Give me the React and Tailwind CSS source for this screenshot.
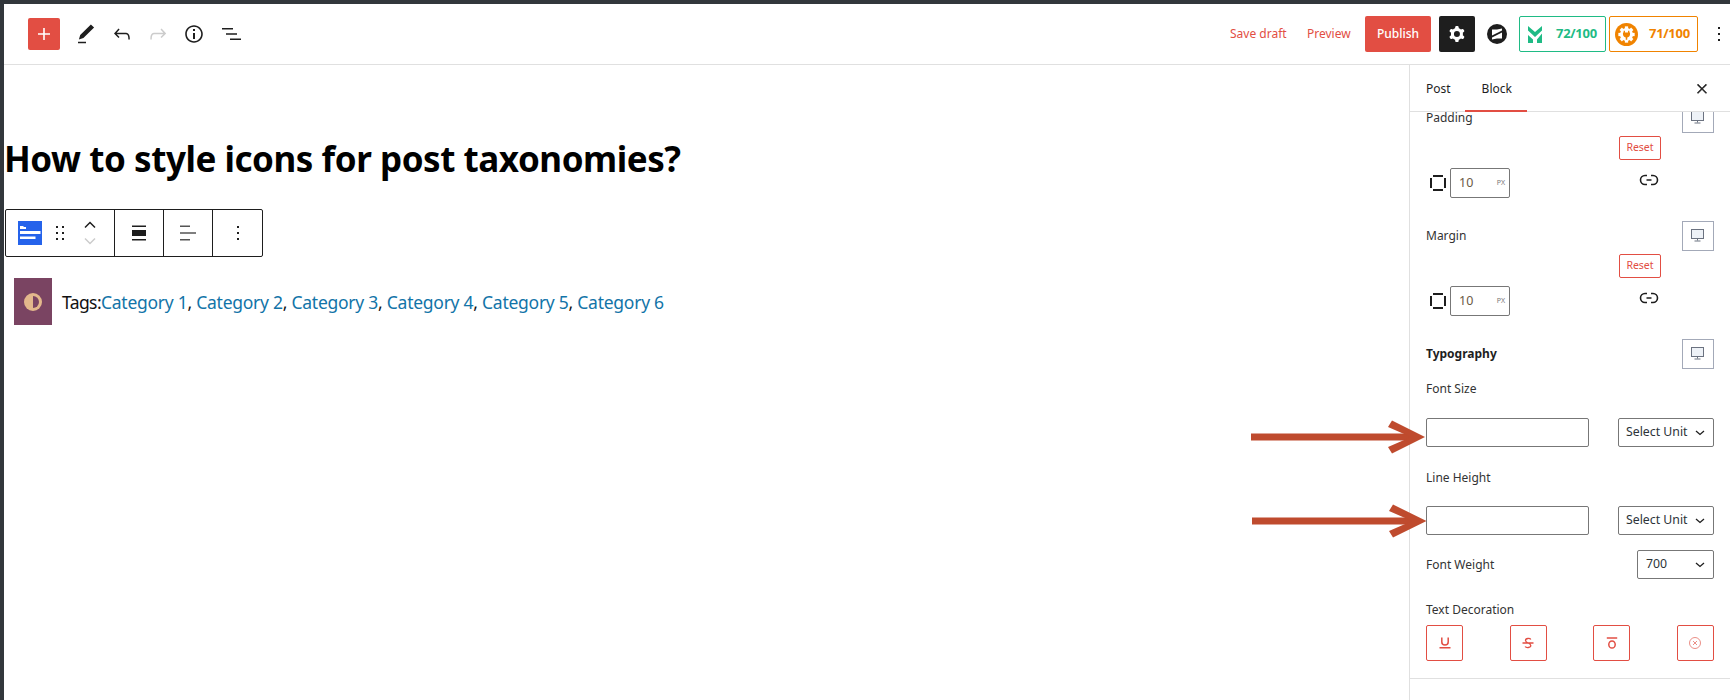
import React from "react";

const Font = "font-['Noto_Sans','Open_Sans',sans-serif]";

function HeaderIcons() {
  return (
    <div className="flex items-center">
      <button className="w-8 h-8 ml-[24px] bg-[#e24e43] rounded-[2px] flex items-center justify-center">
        <svg width="24" height="24" viewBox="0 0 24 24" fill="#fff"><path d="M18 11.2h-5.2V6h-1.6v5.2H6v1.6h5.2V18h1.6v-5.2H18z" /></svg>
      </button>
      <svg className="ml-[14px]" width="24" height="24" viewBox="0 0 24 24" fill="#1e1e1e">
        <path d="M20.1 5.1 16.9 2 6.2 12.6l-1.3 4.4 4.5-1.3L20.1 5.1zM4 20.8h8v-1.5H4v1.5z" transform="translate(0 .4)" />
      </svg>
      <svg className="ml-[12px]" width="24" height="24" viewBox="0 0 24 24" fill="#1e1e1e">
        <path d="M18.3 11.7c-.6-.6-1.4-.9-2.3-.9H6.700l2.900-3.300-1.100-1-4.500 5L8.500 16l1-1-2.700-2.700H16c.5 0 .9.2 1.300.5 1 1 1 3.400 1 4.500v.3h1.500v-.2c0-1.500 0-4.300-1.500-5.700z" />
      </svg>
      <svg className="ml-[12px]" width="24" height="24" viewBox="0 0 24 24" fill="#cccccc">
        <path d="M15.600 6.500l-1.100 1 2.900 3.300H8c-.9 0-1.700.3-2.300.9-1.400 1.500-1.400 4.200-1.400 5.700v.2h1.500v-.3c0-1.100 0-3.500 1-4.500.3-.3.7-.5 1.300-.5h9.200L14.500 15l1.100 1.100 4.600-4.600-4.600-5z" />
      </svg>
      <svg className="ml-[12px]" width="24" height="24" viewBox="0 0 24 24" fill="#1e1e1e">
        <path d="M12 3.200c-4.800 0-8.800 3.900-8.800 8.800 0 4.800 3.900 8.800 8.800 8.800 4.800 0 8.800-3.900 8.800-8.800 0-4.800-4-8.800-8.800-8.800zm0 16c-4 0-7.200-3.300-7.200-7.200C4.800 8 8 4.800 12 4.800s7.200 3.300 7.200 7.200c0 4-3.200 7.200-7.200 7.200zM11 17h2v-6h-2v6zm0-8h2V7h-2v2z" />
      </svg>
      <svg className="ml-[12px]" width="24" height="24" viewBox="0 0 24 24" fill="#1e1e1e">
        <path d="M4 6h11v1.500H4zM8 11.300h11v1.500H8zM12 16.500h11V18H12z" />
      </svg>
    </div>
  );
}

function Gear({ size = 24, fill = "#fff" }) {
  return (
    <svg width={size} height={size} viewBox="0 0 24 24" fill={fill}>
      <path fillRule="evenodd" clipRule="evenodd" d="M10.289 4.836A1 1 0 0 1 11.275 4h1.306a1 1 0 0 1 .987.836l.244 1.466c.787.26 1.503.679 2.108 1.218l1.393-.522a1 1 0 0 1 1.216.437l.653 1.13a1 1 0 0 1-.23 1.273l-1.148.944a6.025 6.025 0 0 1 0 2.435l1.149.946a1 1 0 0 1 .23 1.272l-.653 1.13a1 1 0 0 1-1.216.437l-1.394-.522c-.605.54-1.32.958-2.108 1.218l-.244 1.466a1 1 0 0 1-.987.836h-1.306a1 1 0 0 1-.986-.836l-.244-1.466a5.995 5.995 0 0 1-2.108-1.218l-1.394.522a1 1 0 0 1-1.217-.436l-.653-1.131a1 1 0 0 1 .23-1.272l1.149-.946a6.026 6.026 0 0 1 0-2.435l-1.148-.944a1 1 0 0 1-.23-1.272l.653-1.131a1 1 0 0 1 1.217-.437l1.393.522a5.994 5.994 0 0 1 2.108-1.218l.244-1.466zM14.929 12a3 3 0 1 1-6 0 3 3 0 0 1 6 0z" />
    </svg>
  );
}

function HeaderRight() {
  return (
    <div className="flex items-center">
      <span className="text-[12px] text-[#e24e43] w-[57px] whitespace-nowrap">Save draft</span>
      <span className="text-[12px] text-[#e24e43] ml-[20px] w-[44px] whitespace-nowrap">Preview</span>
      <button className="ml-[14px] w-[66px] h-9 bg-[#e24e43] rounded-[2px] text-[12px] font-medium text-white">Publish</button>
      <button className="ml-[8px] w-9 h-9 bg-[#1e1e1e] rounded-[2px] flex items-center justify-center">
        <Gear />
      </button>
      <svg className="ml-[12px]" width="20" height="20" viewBox="0 0 20 20">
        <circle cx="10" cy="10" r="10" fill="#1e1e1e" />
        <path d="M5 5.500h5L15 4.500v2L5 11.500zM15 8.500v6h-5L5 15.500v-2z" fill="#fff" />
      </svg>
      <div className="ml-[12px] w-[87px] h-9 border border-[#1fbb85] rounded-[2px] flex items-center pl-[8px] gap-[14px]">
        <svg width="14" height="17" viewBox="0 0 14 17" fill="#1fbb85">
          <path d="M0 0 7 6 14 0v4.500L7 11 0 4.500zM0 9 5 13.500V17H0zM14 7.500V17H9v-3.500z" />
        </svg>
        <span className="text-[13px] font-bold text-[#1fbb85] whitespace-nowrap tracking-[-0.3px]">72/100</span>
      </div>
      <div className="ml-[3px] w-[89px] h-9 border border-[#f08300] rounded-[2px] flex items-center pl-[5px] gap-[11px]">
        <svg width="23" height="23" viewBox="0 0 24 24">
          <circle cx="12" cy="12" r="12" fill="#f08300" />
          <circle cx="12" cy="12" r="6.800" fill="#fff" />
          <g fill="#fff">
            <rect x="10.300" y="3.500" width="3.400" height="17" />
            <rect x="10.300" y="3.500" width="3.400" height="17" transform="rotate(45 12 12)" />
            <rect x="10.300" y="3.500" width="3.400" height="17" transform="rotate(90 12 12)" />
            <rect x="10.300" y="3.500" width="3.400" height="17" transform="rotate(135 12 12)" />
          </g>
          <path d="M9 8h1.400v2h3.200V8H15v2h.7v1.500a3.700 3.700 0 0 1-2.900 3.600V17.500h-1.600v-2.400A3.700 3.700 0 0 1 8.300 11.500V10H9z" fill="#f08300" />
        </svg>
        <span className="text-[13px] font-bold text-[#f08300] whitespace-nowrap tracking-[-0.3px]">71/100</span>
      </div>
      <svg className="ml-[9px]" width="24" height="24" viewBox="0 0 24 24" fill="#1e1e1e">
        <path d="M13 19h-2v-2h2v2zm0-6h-2v-2h2v2zm0-6h-2V5h2v2z" />
      </svg>
    </div>
  );
}

function BlockToolbar() {
  return (
    <div className="ml-[1px] mt-[27px] w-[258px] h-12 border border-[#1e1e1e] rounded-[2px] flex bg-white">
      <div className="w-[109px] border-r border-[#1e1e1e] flex items-center">
        <svg className="ml-[12px]" width="24" height="24" viewBox="0 0 24 24">
          <rect width="24" height="24" fill="#2563eb" />
          <rect x="2" y="10" width="20.500" height="3" fill="#fff" />
          <rect x="2" y="15.500" width="15.500" height="2.500" fill="#fff" />
          <path d="M2 5h3l1 1h2v2H2z" fill="#fff" />
        </svg>
        <svg className="ml-[12px]" width="12" height="24" viewBox="0 0 12 24" fill="#1e1e1e">
          <path d="M2 5h2v2H2zM8 5h2v2H8zM2 11h2v2H2zM8 11h2v2H8zM2 17h2v2H2zM8 17h2v2H8z" />
        </svg>
        <div className="ml-[18px] flex flex-col items-center gap-[8px]">
          <svg width="12" height="8" viewBox="0 0 12 8" fill="none" stroke="#1e1e1e" strokeWidth="1.500"><path d="M1 6.500 6 1.500l5 5" /></svg>
          <svg width="12" height="8" viewBox="0 0 12 8" fill="none" stroke="#cccccc" strokeWidth="1.500"><path d="M1 1.500 6 6.500l5-5" /></svg>
        </div>
      </div>
      <div className="w-[49px] border-r border-[#1e1e1e] flex items-center justify-center">
        <svg width="24" height="24" viewBox="0 0 24 24" fill="#1e1e1e">
          <path d="M5 4.500h14V6H5zM5 9h14v6H5zM5 18h14v1.500H5z" />
        </svg>
      </div>
      <div className="w-[49px] border-r border-[#1e1e1e] flex items-center justify-center">
        <svg width="24" height="24" viewBox="0 0 24 24" fill="#555">
          <path d="M4 4.500h10V6H4zM4 11.200h16v1.600H4zM4 18h10v1.500H4z" />
        </svg>
      </div>
      <div className="flex-1 flex items-center justify-center">
        <svg width="24" height="24" viewBox="0 0 24 24" fill="#1e1e1e">
          <path d="M13 19h-2v-2h2v2zm0-6h-2v-2h2v2zm0-6h-2V5h2v2z" />
        </svg>
      </div>
    </div>
  );
}

function Canvas() {
  const cats = ["Category 1", "Category 2", "Category 3", "Category 4", "Category 5", "Category 6"];
  return (
    <main className="flex-1 min-w-0 flex flex-col">
      <h1 className="mt-[71px] text-[35px] leading-[46px] font-bold text-black whitespace-nowrap tracking-[-0.45px]">
        How to style icons for post taxonomies?
      </h1>
      <BlockToolbar />
      <div className="mt-[21px] ml-[10px] flex items-center">
        <div className="w-[38px] h-[47px] bg-[#7a4462] flex items-center justify-center">
          <svg width="18" height="18" viewBox="0 0 18 18">
            <circle cx="9" cy="9" r="9" fill="#e3b88c" />
            <path d="M9 3a6 6 0 0 1 0 12z" fill="#7a4462" />
          </svg>
        </div>
        <p className="ml-[10px] text-[17.5px] leading-[24px] text-[#111] whitespace-nowrap tracking-[-0.26px]">
          <span className="tracking-[-0.6px]">Tags:</span>
          {cats.map((c, i) => (
            <React.Fragment key={c}>
              <span className="text-[#1274a8]">{c}</span>
              {i < cats.length - 1 ? ", " : ""}
            </React.Fragment>
          ))}
        </p>
      </div>
    </main>
  );
}

function Monitor() {
  return (
    <svg width="18" height="18" viewBox="0 0 18 18" fill="none" stroke="#6b7280" strokeWidth="1">
      <rect x="2.500" y="2.500" width="12" height="9" fill="#eef2f7" />
      <path d="M8.500 11.500v2M5.500 14h6" />
    </svg>
  );
}

function RespButton() {
  return (
    <div className="w-8 h-[30px] border border-[#a3a9b8] flex items-center justify-center shrink-0">
      <Monitor />
    </div>
  );
}

function Spacing({ label }) {
  return (
    <div className="flex flex-col">
      <div className="flex justify-between items-center h-[30px]">
        <span className="text-[12px] text-[#333]">{label}</span>
        <RespButton />
      </div>
      <div className="flex justify-end pr-[53px] mt-[3px]">
        <button className="w-[42px] h-6 border border-[#e24e43] rounded-[2px] text-[10.5px] text-[#e24e43]">Reset</button>
      </div>
      <div className="flex items-center mt-[8px] h-[30px]">
        <svg className="ml-[3px]" width="18" height="18" viewBox="0 0 18 18" fill="#1e1e1e">
          <path d="M4 1h10v2H4zM4 15h10v2H4zM1 4h2v10H1zM15 4h2v10h-2z" />
        </svg>
        <div className="ml-[3px] w-[60px] h-[30px] border border-[#777] rounded-[2px] flex items-center justify-between pl-[8px] pr-[4px]">
          <span className="text-[12.5px] text-[#6b5a45]">10</span>
          <span className="text-[7px] text-[#777]">PX</span>
        </div>
        <svg className="ml-[129px] mb-[6px]" width="20" height="20" viewBox="0 0 20 20" fill="none" stroke="#1e1e1e" strokeWidth="1.600">
          <path d="M8 5.500H6a4.500 4.500 0 0 0 0 9h2M12 5.500h2a4.500 4.500 0 0 1 0 9h-2M7.500 10h5" />
        </svg>
      </div>
    </div>
  );
}

function Chevron() {
  return (
    <svg width="10" height="6" viewBox="0 0 10 6" fill="none" stroke="#1e1e1e" strokeWidth="1.300"><path d="M1 1l4 3.500L9 1" /></svg>
  );
}

function UnitRow({ gap }) {
  return (
    <div className={`flex justify-between h-[29px] ${gap}`}>
      <div className="w-[163px] border border-[#777] rounded-[2px]" />
      <div className="w-[96px] border border-[#777] rounded-[2px] flex items-center justify-between pl-[7px] pr-[8px]">
        <span className="text-[12.3px] text-[#2c3338] whitespace-nowrap">Select Unit</span>
        <Chevron />
      </div>
    </div>
  );
}

function Sidebar() {
  const iconBtn = "w-[37px] h-[36px] border border-[#e24e43] rounded-[2px] flex items-center justify-center";
  return (
    <aside className="w-[321px] shrink-0 border-l border-[#e0e0e0] flex flex-col h-[635px]">
      <div className="h-[47px] shrink-0 border-b border-[#e0e0e0] flex items-center relative pt-[2px]">
        <span className="ml-[16px] text-[12px] text-[#1e1e1e]">Post</span>
        <span className="ml-[31px] text-[12px] text-[#1e1e1e]">Block</span>
        <span className="absolute left-[55px] bottom-[-1px] w-[62px] h-[2px] bg-[#e24e43]" />
        <svg className="ml-auto mr-[19px]" width="18" height="18" viewBox="0 0 24 24" fill="#1e1e1e" stroke="#1e1e1e" strokeWidth="0.600">
          <path d="M13 11.800l5.300-5.300-1.100-1.100-5.200 5.300-5.300-5.300-1.100 1.100 5.300 5.300-5.300 5.200 1.100 1.100 5.300-5.300 5.200 5.300 1.100-1.100z" />
        </svg>
      </div>
      <div className="flex-1 overflow-hidden">
        <div className="px-[16px] -mt-[9px]">
          <Spacing label="Padding" />
          <div className="mt-[23px]"><Spacing label="Margin" /></div>
          <div className="mt-[23px] flex justify-between items-center h-[30px]">
            <span className="text-[12px] font-bold text-[#1e1e1e]">Typography</span>
            <RespButton />
          </div>
          <div className="mt-[11px] text-[12px] leading-[18px] text-[#333]">Font Size</div>
          <UnitRow gap="mt-[20px]" />
          <div className="mt-[22px] text-[12px] leading-[18px] text-[#333]">Line Height</div>
          <UnitRow gap="mt-[19px]" />
          <div className="mt-[15px] flex justify-between items-center h-[29px]">
            <span className="text-[12px] text-[#333]">Font Weight</span>
            <div className="w-[77px] h-[29px] border border-[#777] rounded-[2px] flex items-center justify-between pl-[8px] pr-[8px]">
              <span className="text-[12.3px] text-[#2c3338]">700</span>
              <Chevron />
            </div>
          </div>
          <div className="mt-[22px] text-[12px] leading-[18px] text-[#333]">Text Decoration</div>
          <div className="mt-[6px] flex justify-between">
            <div className={iconBtn}>
              <svg width="14" height="14" viewBox="0 0 14 14" fill="none" stroke="#e24e43" strokeWidth="1.500"><path d="M3.800 1.500v4.500a3.200 3 0 0 0 6.400 0V1.500M1.500 11.800h11" /></svg>
            </div>
            <div className={iconBtn}>
              <svg width="14" height="14" viewBox="0 0 14 14" fill="none" stroke="#e24e43" strokeWidth="1.300"><path d="M9.800 3.500C9 2 4.500 2 4.500 4.500S9.800 7 9.800 9.500 5 12 4.200 10.500M1.500 7h11" /></svg>
            </div>
            <div className={iconBtn}>
              <svg width="14" height="14" viewBox="0 0 14 14" fill="none" stroke="#e24e43" strokeWidth="1.500"><path d="M1.800 2h10.400" /><ellipse cx="7" cy="8.500" rx="3.200" ry="3.600" /></svg>
            </div>
            <div className={iconBtn}>
              <svg width="14" height="14" viewBox="0 0 14 14" fill="none" stroke="#eb8f87" strokeWidth="1"><circle cx="7" cy="7" r="5.500" /><path d="M5 5l4 4M9 5l-4 4" /></svg>
            </div>
          </div>
          <div className="-mx-[16px] mt-[17px] border-t border-[#e0e0e0]" />
        </div>
      </div>
    </aside>
  );
}

export default function App() {
  return (
    <div className={`relative w-[1730px] h-[700px] overflow-hidden bg-white border-t-[4px] border-l-[4px] border-[#32373c] ${Font}`}>
      <header className="h-[61px] border-b border-[#e0e0e0] flex items-center justify-between">
        <HeaderIcons />
        <div className="-mr-[1px]"><HeaderRight /></div>
      </header>
      <div className="flex">
        <Canvas />
        <Sidebar />
      </div>
      <svg className="absolute left-[1236px] top-[396px] pointer-events-none" width="200" height="150" viewBox="0 0 200 150" fill="#bf4b2e">
        <path d="M11 33.500h164v7H11z" />
        <path d="M185 37 152 20.500l-4 6.500L171 37l-23 10 4 6.500z" />
        <path d="M12 117.500h164v7H12z" />
        <path d="M186.500 121 153 104.500l-4 6.500 23 10-23 10 4 6.500z" />
      </svg>
    </div>
  );
}
